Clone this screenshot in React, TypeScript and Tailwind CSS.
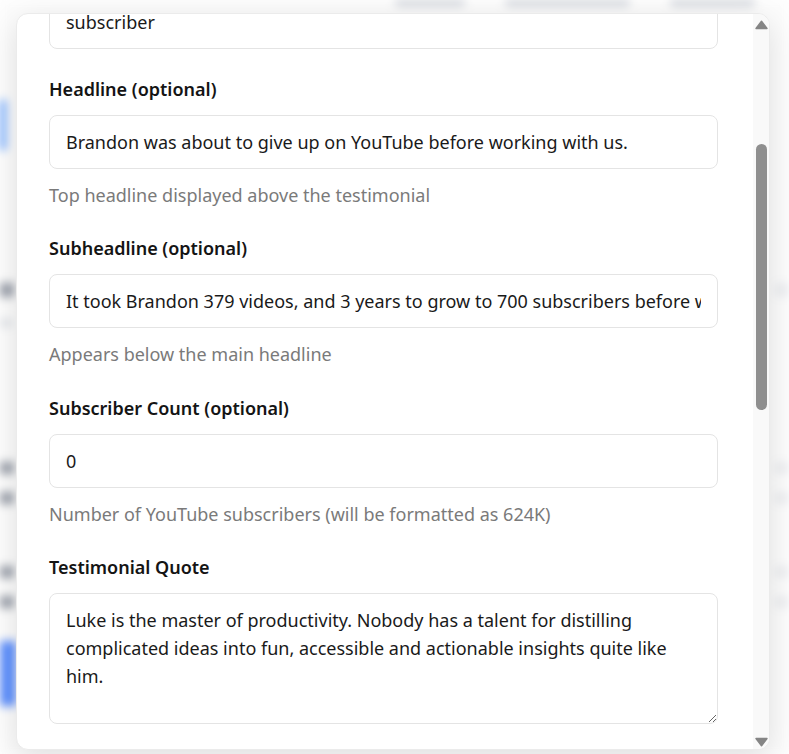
import React, { useLayoutEffect, useRef } from 'react';

type FieldProps = {
  label: string;
  value: string;
  helper?: string;
  labelRef?: React.Ref<HTMLLabelElement>;
};

function Field({ label, value, helper, labelRef }: FieldProps) {
  return (
    <div>
      <label ref={labelRef} className="block text-lg leading-7 font-semibold text-[#141414] mb-3">
        {label}
      </label>
      <input
        readOnly
        value={value}
        className="block w-full h-[54px] px-4 rounded-lg border border-[#e4e4e4] bg-white text-lg text-[#1a1a1a] outline-none"
      />
      {helper && <p className="mt-3 text-lg leading-7 text-[#7a7a7a]">{helper}</p>}
    </div>
  );
}

function Backdrop() {
  return (
    <div className="absolute inset-0 overflow-hidden bg-[#fbfbfb] blur-[5px]">
      <div className="flex h-[6px] gap-10 pl-[395px]">
        <div className="w-[70px] bg-gray-400/70 rounded-b" />
        <div className="w-[125px] bg-gray-400/70 rounded-b" />
        <div className="w-[85px] bg-gray-400/70 rounded-b" />
      </div>
      <div className="mt-[94px] h-[50px] w-[6px] bg-blue-500" />
      <div className="mt-[133px] flex h-[14px] justify-between">
        <div className="w-[14px] bg-gray-500" />
        <div className="w-[14px] bg-gray-200" />
      </div>
      <div className="mt-[22px] h-[8px] w-[12px] bg-gray-300" />
      <div className="mt-[135px] flex h-[12px] justify-between">
        <div className="w-[14px] bg-gray-500" />
        <div className="w-[14px] bg-gray-200" />
      </div>
      <div className="mt-[18px] flex h-[12px] justify-between">
        <div className="w-[14px] bg-gray-500" />
        <div className="w-[14px] bg-gray-200" />
      </div>
      <div className="mt-[62px] flex h-[12px] justify-between">
        <div className="w-[14px] bg-gray-500" />
        <div className="w-[14px] bg-gray-200" />
      </div>
      <div className="mt-[18px] flex h-[12px] justify-between">
        <div className="w-[14px] bg-gray-500" />
        <div className="w-[14px] bg-gray-200" />
      </div>
      <div className="mt-[33px] h-[65px] w-[16px] bg-blue-600" />
    </div>
  );
}

function Arrow({ down }: { down?: boolean }) {
  return (
    <svg width="13" height="10" viewBox="0 0 13 10" className={down ? 'rotate-180' : ''}>
      <path d="M6.5 1.2 L12 8.5 L1 8.5 Z" fill="#858585" stroke="#858585" strokeWidth="1.4" strokeLinejoin="round" />
    </svg>
  );
}

function Scrollbar() {
  return (
    <div className="flex w-[16px] shrink-0 flex-col items-center bg-[#f9f9f9]">
      <div className="flex h-[16px] w-full items-end justify-center">
        <Arrow />
      </div>
      <div className="mt-[114px] h-[266px] w-[11px] rounded-full bg-[#8f8f8f]" />
      <div className="flex-1" />
      <div className="flex h-[16px] w-full items-start justify-center pt-[4px]">
        <Arrow down />
      </div>
    </div>
  );
}

export default function App() {
  const scrollRef = useRef<HTMLDivElement>(null);
  const headlineRef = useRef<HTMLLabelElement>(null);

  useLayoutEffect(() => {
    const box = scrollRef.current;
    const label = headlineRef.current;
    if (!box || !label) return;
    box.scrollTop += label.getBoundingClientRect().top - 75;
  }, []);

  return (
    <div className="relative h-[754px] w-full overflow-hidden font-['Noto_Sans',sans-serif]">
      <Backdrop />
      <div className="absolute inset-0 bg-white/30 pl-4 pt-[13px]">
        <div className="flex w-[754px] h-[737px] overflow-hidden rounded-xl border border-[#ebebeb] bg-white shadow-[0_8px_30px_rgba(0,0,0,0.12)]">
          <div ref={scrollRef} className="flex-1 overflow-y-auto [scrollbar-width:none]">
            <div className="pl-8 pr-[35px] pt-8 pb-8">
              <h2 className="text-xl leading-7 font-semibold text-[#141414]">Edit Testimonial</h2>
              <p className="mb-4 text-base leading-6 text-[#7a7a7a]">Update the details shown on the case study card</p>
              <div className="flex flex-col gap-[25.4px]">
                <Field label="Client Name" value="Brandon" helper="Name shown on the testimonial card" />
                <Field label="Subscriber Label" value="subscriber" />
                <Field
                  labelRef={headlineRef}
                  label="Headline (optional)"
                  value="Brandon was about to give up on YouTube before working with us."
                  helper="Top headline displayed above the testimonial"
                />
                <Field
                  label="Subheadline (optional)"
                  value="It took Brandon 379 videos, and 3 years to grow to 700 subscribers before working with us."
                  helper="Appears below the main headline"
                />
                <Field
                  label="Subscriber Count (optional)"
                  value="0"
                  helper="Number of YouTube subscribers (will be formatted as 624K)"
                />
                <div>
                  <label className="block text-lg leading-7 font-semibold text-[#141414] mb-3">Testimonial Quote</label>
                  <textarea
                    readOnly
                    value="Luke is the master of productivity. Nobody has a talent for distilling complicated ideas into fun, accessible and actionable insights quite like him."
                    className="block w-full h-[131px] px-4 pt-3 pb-3 rounded-lg border border-[#e4e4e4] bg-white text-lg leading-7 text-[#1a1a1a] outline-none resize-y"
                  />
                </div>
                <Field label="Author Name" value="Brandon Carter" helper="Person credited for the quote" />
                <Field label="Author Role (optional)" value="YouTube Creator" helper="Shown under the author name" />
                <Field label="Video URL (optional)" value="https://youtube.com/@brandon" helper="Link to the featured video" />
                <Field label="Display Order" value="1" helper="Lower numbers are shown first" />
              </div>
              <div className="mt-8 flex justify-end gap-3 border-t border-[#ebebeb] pt-6">
                <button className="h-11 rounded-lg border border-[#e4e4e4] px-5 text-base text-[#1a1a1a]">Cancel</button>
                <button className="h-11 rounded-lg bg-blue-600 px-5 text-base font-semibold text-white">Save Changes</button>
              </div>
            </div>
          </div>
          <Scrollbar />
        </div>
      </div>
    </div>
  );
}
